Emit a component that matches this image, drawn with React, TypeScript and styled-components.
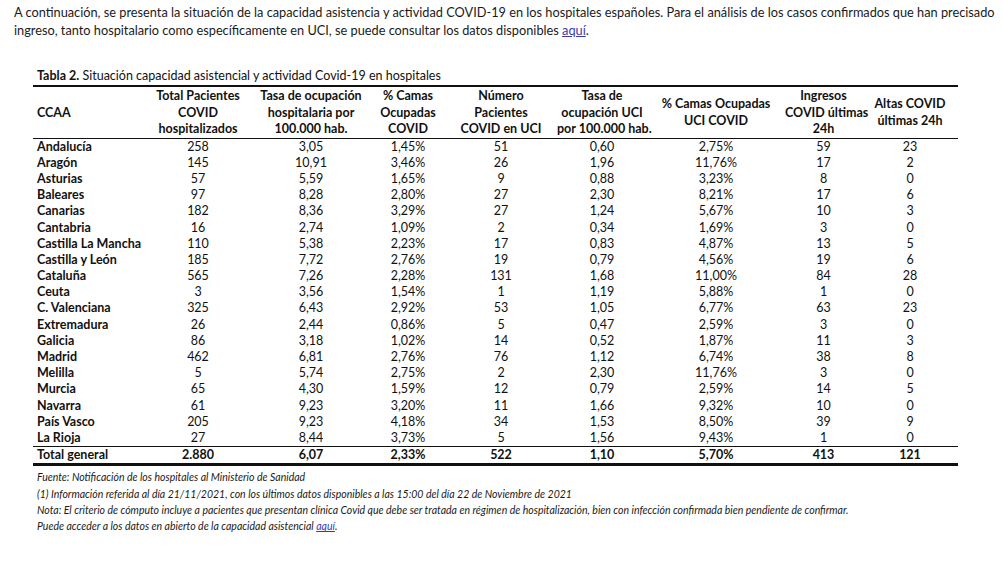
import React from "react";
import styled, { createGlobalStyle } from "styled-components";

const Global = createGlobalStyle`
  html, body { margin: 0; padding: 0; background: #fff; }
  body { font-family: Lato, "Open Sans", "Liberation Sans", sans-serif; color: #111; }
`;

const Page = styled.div`
  width: 1002px;
  height: 582px;
  overflow: hidden;
  padding-top: 3px;
  box-sizing: border-box;
`;

const Intro = styled.p`
  margin: 0 0 0 14px;
  width: 985px;
  font-size: 12.75px;
  line-height: 18px;
  color: #1a1a1a;
  white-space: nowrap;
`;

const Link = styled.a`
  color: #3a3ab0;
  text-decoration: underline;
`;

const TableBlock = styled.div`
  margin: 29px 0 0 33px;
  width: 925px;
`;

const Caption = styled.div`
  padding-left: 4px;
  font-size: 12.5px;
  line-height: 16px;
  height: 17px;
  b { font-weight: 700; }
`;

const Table = styled.table`
  width: 925px;
  border-collapse: collapse;
  table-layout: fixed;
  font-size: 12.5px;
  color: #111;
`;

const HeadRow = styled.tr`
  border-top: 2px solid #111;
  border-bottom: 1.5px solid #111;
`;

const Th = styled.th<{ $left?: boolean }>`
  font-weight: 700;
  text-align: ${(p) => (p.$left ? "left" : "center")};
  padding: 1px 0 0 ${(p) => (p.$left ? "4px" : "0")};
  height: 49px;
  line-height: 16.5px;
  white-space: nowrap;
  vertical-align: middle;
`;

const Row = styled.tr<{ $total?: boolean }>`
  ${(p) =>
    p.$total
      ? `border-top: 1.5px solid #111; border-bottom: 3px solid #111; font-weight: 700;`
      : ""}
`;

const Td = styled.td<{ $name?: boolean }>`
  height: 16.2px;
  padding: 0 0 0 ${(p) => (p.$name ? "4px" : "0")};
  line-height: 16px;
  text-align: ${(p) => (p.$name ? "left" : "center")};
  font-weight: ${(p) => (p.$name ? 700 : "inherit")};
  white-space: nowrap;
`;

const Notes = styled.div`
  margin: 3px 0 0 37px;
  font-size: 10.5px;
  font-style: italic;
  line-height: 16.4px;
  color: #1a1a1a;
  white-space: nowrap;
`;

const cols = [112, 106, 120, 74, 112, 90, 138, 77, 96];

const headers: React.ReactNode[] = [
  "CCAA",
  <>Total Pacientes<br />COVID<br />hospitalizados</>,
  <>Tasa de ocupación<br />hospitalaria por<br />100.000 hab.</>,
  <>% Camas<br />Ocupadas<br />COVID</>,
  <>Número<br />Pacientes<br />COVID en UCI</>,
  <>Tasa de<br />ocupación UCI<br />por 100.000 hab.</>,
  <>% Camas Ocupadas<br />UCI COVID</>,
  <>Ingresos<br />COVID últimas<br />24h</>,
  <>Altas COVID<br />últimas 24h</>,
];

const rows: string[][] = [
  ["Andalucía", "258", "3,05", "1,45%", "51", "0,60", "2,75%", "59", "23"],
  ["Aragón", "145", "10,91", "3,46%", "26", "1,96", "11,76%", "17", "2"],
  ["Asturias", "57", "5,59", "1,65%", "9", "0,88", "3,23%", "8", "0"],
  ["Baleares", "97", "8,28", "2,80%", "27", "2,30", "8,21%", "17", "6"],
  ["Canarias", "182", "8,36", "3,29%", "27", "1,24", "5,67%", "10", "3"],
  ["Cantabria", "16", "2,74", "1,09%", "2", "0,34", "1,69%", "3", "0"],
  ["Castilla La Mancha", "110", "5,38", "2,23%", "17", "0,83", "4,87%", "13", "5"],
  ["Castilla y León", "185", "7,72", "2,76%", "19", "0,79", "4,56%", "19", "6"],
  ["Cataluña", "565", "7,26", "2,28%", "131", "1,68", "11,00%", "84", "28"],
  ["Ceuta", "3", "3,56", "1,54%", "1", "1,19", "5,88%", "1", "0"],
  ["C. Valenciana", "325", "6,43", "2,92%", "53", "1,05", "6,77%", "63", "23"],
  ["Extremadura", "26", "2,44", "0,86%", "5", "0,47", "2,59%", "3", "0"],
  ["Galicia", "86", "3,18", "1,02%", "14", "0,52", "1,87%", "11", "3"],
  ["Madrid", "462", "6,81", "2,76%", "76", "1,12", "6,74%", "38", "8"],
  ["Melilla", "5", "5,74", "2,75%", "2", "2,30", "11,76%", "3", "0"],
  ["Murcia", "65", "4,30", "1,59%", "12", "0,79", "2,59%", "14", "5"],
  ["Navarra", "61", "9,23", "3,20%", "11", "1,66", "9,32%", "10", "0"],
  ["País Vasco", "205", "9,23", "4,18%", "34", "1,53", "8,50%", "39", "9"],
  ["La Rioja", "27", "8,44", "3,73%", "5", "1,56", "9,43%", "1", "0"],
];

const total = ["Total general", "2.880", "6,07", "2,33%", "522", "1,10", "5,70%", "413", "121"];

export default function App() {
  return (
    <Page>
      <Global />
      <Intro>
        A continuación, se presenta la situación de la capacidad asistencia y actividad COVID-19 en los hospitales españoles. Para el análisis de los casos confirmados que han precisado
        <br />
        ingreso, tanto hospitalario como específicamente en UCI, se puede consultar los datos disponibles <Link href="#">aquí</Link>.
      </Intro>
      <TableBlock>
        <Caption>
          <b>Tabla 2.</b> Situación capacidad asistencial y actividad Covid-19 en hospitales
        </Caption>
        <Table>
          <colgroup>
            {cols.map((w, i) => (
              <col key={i} style={{ width: w }} />
            ))}
          </colgroup>
          <thead>
            <HeadRow>
              {headers.map((h, i) => (
                <Th key={i} $left={i === 0}>{h}</Th>
              ))}
            </HeadRow>
          </thead>
          <tbody>
            {rows.map((r) => (
              <Row key={r[0]}>
                {r.map((c, i) => (
                  <Td key={i} $name={i === 0}>{c}</Td>
                ))}
              </Row>
            ))}
            <Row $total>
              {total.map((c, i) => (
                <Td key={i} $name={i === 0}>{c}</Td>
              ))}
            </Row>
          </tbody>
        </Table>
      </TableBlock>
      <Notes>
        <div>Fuente: Notificación de los hospitales al Ministerio de Sanidad</div>
        <div>(1) Información referida al día 21/11/2021, con los últimos datos disponibles a las 15:00 del día 22 de Noviembre de 2021</div>
        <div>Nota: El criterio de cómputo incluye a pacientes que presentan clínica Covid que debe ser tratada en régimen de hospitalización, bien con infección confirmada bien pendiente de confirmar.</div>
        <div>Puede acceder a los datos en abierto de la capacidad asistencial <Link href="#">aquí</Link>.</div>
      </Notes>
    </Page>
  );
}
